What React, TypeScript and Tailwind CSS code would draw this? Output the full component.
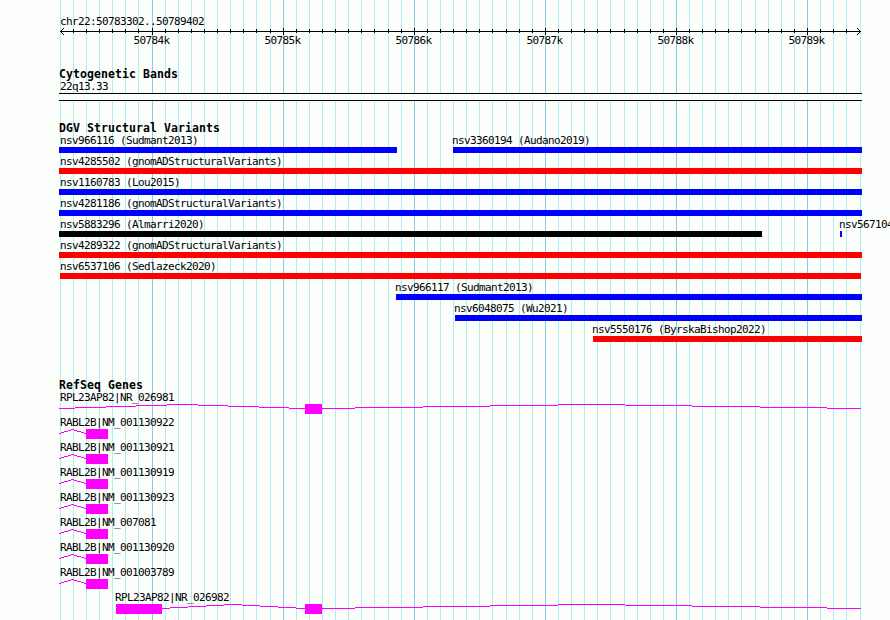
const LEFT = 59;
const RIGHT = 862;

const majors = [152, 283, 414, 545, 676, 807];
const minors = [
  60, 73, 86, 99, 112, 125, 138, 165, 178, 191, 204, 217, 230, 243, 256, 270,
  296, 309, 322, 335, 348, 361, 374, 388, 401, 427, 440, 453, 466, 479, 492,
  506, 519, 532, 558, 571, 584, 597, 610, 624, 637, 650, 663, 689, 702, 715,
  728, 741, 755, 768, 781, 794, 820, 833, 846, 860,
];

type Variant = { label: string; start: number; end: number; color: string };

const variantRows: Variant[][] = [
  [
    { label: "nsv966116 (Sudmant2013)", start: 59, end: 397, color: "bg-[#0000ff]" },
    { label: "nsv3360194 (Audano2019)", start: 453, end: 862, color: "bg-[#0000ff]" },
  ],
  [{ label: "nsv4285502 (gnomADStructuralVariants)", start: 59, end: 862, color: "bg-[#ff0000]" }],
  [{ label: "nsv1160783 (Lou2015)", start: 59, end: 862, color: "bg-[#0000ff]" }],
  [{ label: "nsv4281186 (gnomADStructuralVariants)", start: 59, end: 862, color: "bg-[#0000ff]" }],
  [
    { label: "nsv5883296 (Almarri2020)", start: 59, end: 762, color: "bg-black" },
    { label: "nsv567104", start: 840, end: 842, color: "bg-[#0000ff]" },
  ],
  [{ label: "nsv4289322 (gnomADStructuralVariants)", start: 59, end: 862, color: "bg-[#ff0000]" }],
  [{ label: "nsv6537106 (Sedlazeck2020)", start: 60, end: 861, color: "bg-[#ff0000]" }],
  [{ label: "nsv966117 (Sudmant2013)", start: 396, end: 862, color: "bg-[#0000ff]" }],
  [{ label: "nsv6048075 (Wu2021)", start: 455, end: 862, color: "bg-[#0000ff]" }],
  [{ label: "nsv5550176 (ByrskaBishop2022)", start: 593, end: 862, color: "bg-[#ff0000]" }],
];

// Each intron is a list of x breakpoints, rising one pixel per step to the
// middle segment and falling back again.
type Gene = { label: string; start: number; exons: number[][]; introns: number[][] };

const longIntron = [322, 355, 423, 490, 558, 625, 692, 760, 827, 861];
const rabl = (label: string): Gene => ({
  label,
  start: 59,
  exons: [[86, 108]],
  introns: [[59, 61, 64, 68, 71, 74, 77, 81, 84, 86]],
});

const genes: Gene[] = [
  {
    label: "RPL23AP82|NR_026981",
    start: 59,
    exons: [[305, 322]],
    introns: [[59, 75, 106, 136, 167, 198, 228, 259, 289, 305], longIntron],
  },
  rabl("RABL2B|NM_001130922"),
  rabl("RABL2B|NM_001130921"),
  rabl("RABL2B|NM_001130919"),
  rabl("RABL2B|NM_001130923"),
  rabl("RABL2B|NM_007081"),
  rabl("RABL2B|NM_001130920"),
  rabl("RABL2B|NM_001003789"),
  {
    label: "RPL23AP82|NR_026982",
    start: 116,
    exons: [[116, 162], [305, 322]],
    introns: [[162, 170, 188, 206, 224, 242, 260, 278, 296, 305], longIntron],
  },
];

const labelLeft = (start: number) => Math.max(start - 1, LEFT + 1);

const Label = ({ children }: { children: string }) => (
  <div className="h-3 whitespace-nowrap text-[11px] leading-[14px] tracking-[-0.62px]">
    {children}
  </div>
);

const Heading = ({ children }: { children: string }) => (
  <h2 className="ml-[59px] h-3 whitespace-nowrap text-[11.5px] font-bold leading-3 tracking-[0.08px]">
    {children}
  </h2>
);

const Grid = () => (
  <svg className="absolute inset-0 -z-10" width="890" height="620" shapeRendering="crispEdges">
    {minors.map((x) => (
      <rect key={x} x={x} y="0" width="1" height="620" fill="#afeeee" />
    ))}
    {majors.map((x) => (
      <rect key={x} x={x} y="0" width="1" height="620" fill="#87ceeb" />
    ))}
  </svg>
);

const Ruler = () => (
  <svg className="block" width="890" height="8" shapeRendering="crispEdges">
    <rect x="60" y="4" width="801" height="1" />
    {minors.slice(1, -1).map((x) => (
      <rect key={x} x={x} y="2" width="1" height="4" />
    ))}
    {majors.map((x) => (
      <rect key={x} x={x} y="1" width="1" height="7" />
    ))}
    <path d="M61 3h1v1h-1zM62 2h1v1h-1zM63 1h1v1h-1zM61 5h1v1h-1zM62 6h1v1h-1zM63 7h1v1h-1z" />
    <path d="M859 3h1v1h-1zM858 2h1v1h-1zM857 1h1v1h-1zM859 5h1v1h-1zM858 6h1v1h-1zM857 7h1v1h-1z" />
  </svg>
);

const VariantRow = ({ row }: { row: Variant[] }) => (
  <div className="flex h-[21px]">
    {row.map((v, i) => (
      <div
        key={v.label}
        className="shrink-0"
        style={{ width: v.end - v.start, marginLeft: v.start - (i ? row[i - 1].end : 0) }}
      >
        <div style={{ marginLeft: labelLeft(v.start) - v.start }}>
          <Label>{v.label}</Label>
        </div>
        <div className={`mt-px h-1.5 ${v.color}`} />
      </div>
    ))}
  </div>
);

const GeneRow = ({ gene }: { gene: Gene }) => (
  <div className="h-[25px]">
    <div style={{ marginLeft: labelLeft(gene.start) }}>
      <Label>{gene.label}</Label>
    </div>
    <svg className="mt-px block" width="890" height="10" fill="#ff00ff" shapeRendering="crispEdges">
      {gene.introns.map((steps) =>
        steps.slice(0, -1).map((x, i) => (
          <rect key={x} x={x} y={Math.abs(4 - i)} width={steps[i + 1] - x} height="1" />
        ))
      )}
      {gene.exons.map(([start, end]) => (
        <rect key={start} x={start} y="0" width={end - start} height="10" />
      ))}
    </svg>
  </div>
);

const App = () => {
  return (
    <div className="relative isolate h-[620px] w-[890px] overflow-hidden bg-[#fcfefc] pt-[15px] font-['DejaVu_Sans_Mono',monospace] text-black">
      <Grid />
      <div className="ml-[60px]">
        <Label>chr22:50783302..50789402</Label>
      </div>
      <Ruler />
      <div className="-mt-px ml-[86px] flex">
        {majors.map((x, i) => (
          <div key={x} className="w-[131px] text-center">
            <Label>{`${50784 + i}k`}</Label>
          </div>
        ))}
      </div>

      <div className="mt-[22px]">
        <Heading>Cytogenetic Bands</Heading>
        <div className="ml-[60px]">
          <Label>22q13.33</Label>
        </div>
        <div
          className="ml-[59px] mt-px h-2 border-y border-black bg-[#fcfefc]"
          style={{ width: RIGHT - LEFT }}
        />
      </div>

      <div className="mt-[21px]">
        <Heading>DGV Structural Variants</Heading>
        {variantRows.map((row) => (
          <VariantRow key={row[0].label} row={row} />
        ))}
      </div>

      <div className="mt-[35px]">
        <Heading>RefSeq Genes</Heading>
        {genes.map((gene) => (
          <GeneRow key={gene.label} gene={gene} />
        ))}
      </div>
    </div>
  );
};

export default App;
